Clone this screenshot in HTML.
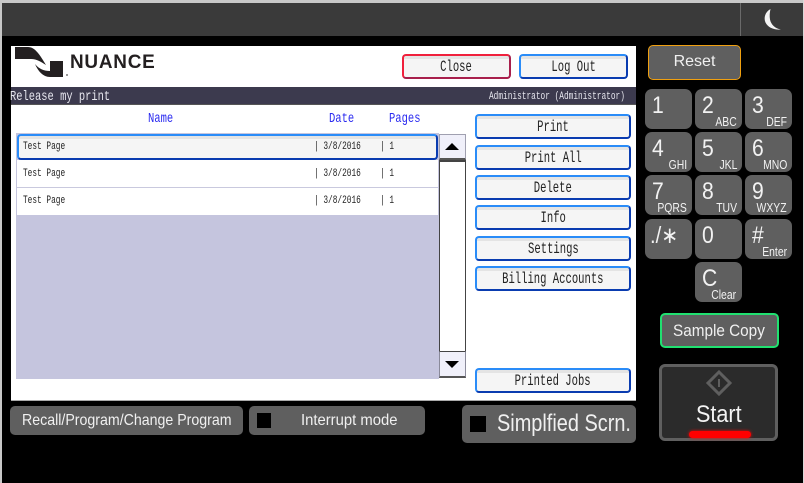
<!DOCTYPE html>
<html><head><meta charset="utf-8">
<style>
html,body{margin:0;padding:0}
body{width:804px;height:483px;background:#000;position:relative;overflow:hidden;font-family:"Liberation Sans",sans-serif}
div,span{position:absolute;box-sizing:border-box;white-space:nowrap}
.btn{border:2px solid;border-color:#2a8cf8 #0a3cb0 #0a3cb0 #2a8cf8;border-radius:4px;background:linear-gradient(#e4e4e4 0 3px,#f5f5f5 3px);color:#222;text-align:center;font-family:"Liberation Mono",monospace;font-size:16px;left:475px;width:156px;height:25px;line-height:22px;overflow:visible}
.btn span{position:static;display:inline-block;transform:scaleX(.66);margin:0 -10px}
.key{background:#5f5f5f;border-radius:7px;width:47px;height:40px;color:#f2f2f2}
.key b{position:absolute;font-weight:400;font-size:24px;left:7px;top:2px;line-height:30px;transform:scaleX(.88);transform-origin:0 0}
.key i{position:absolute;font-style:normal;font-size:13px;right:5px;bottom:0;line-height:15px;transform:scaleX(.8);transform-origin:100% 0}
.g{background:#5f5f5f;color:#f0f0f0;text-align:center}
.row{left:17px;width:421px;height:27px;background:#fff;border-bottom:1px solid #c9c9de}
.t{font-family:"Liberation Mono",monospace;font-size:11px;color:#222;line-height:11px;transform:scaleX(.71);transform-origin:0 0}
.h{font-family:"Liberation Mono",monospace;font-size:14px;color:#2a2af0;line-height:15px;top:112px;transform:scaleX(.75);transform-origin:0 0}
.l{transform-origin:0 0;color:#f0f0f0}
</style></head><body>
<div style="left:0;top:0;width:804px;height:3px;background:#c8c8c8"></div>
<div style="left:0;top:0;width:2px;height:483px;background:#c8c8c8"></div>
<div style="left:803px;top:0;width:1px;height:483px;background:#d8d8d8"></div>
<div style="left:2px;top:3px;width:801px;height:33px;background:#3a3a3a"></div>
<div style="left:740px;top:3px;width:1px;height:33px;background:#6a6a6a"></div>
<svg style="position:absolute;left:755px;top:4px" width="32" height="30" viewBox="0 0 32 30"><path d="M15.500 5C10 8 8.500 14 10.500 18.500c2.500 5 8 7.500 15.500 7-6-1-10-5-11-10-.6-3.500-.3-7 .5-10.500z" fill="#f4f4f4"/></svg>

<div style="left:11px;top:46px;width:625px;height:355px;background:#fff;border-bottom:1px solid #aaa"></div>
<svg style="position:absolute;left:0;top:0" width="80" height="80" viewBox="0 0 80 80"><path d="M15 47H28C35 47 40 55 46 65 41 62 37 59 31 59H15Z" fill="#231f20"/><path d="M35 64C39 69 44 71 50 71V61H63V77H50C43 77 38 71 35 64Z" fill="#231f20"/><circle cx="67" cy="75" r="1" fill="#777"/></svg>
<div style="left:70px;top:51px;font-size:19.500px;line-height:23px;color:#231f20;font-weight:700;letter-spacing:.8px;transform:scaleX(.97);transform-origin:0 0">NUANCE</div>

<div class="btn" style="left:402px;top:54px;width:109px;border-color:#f0203c #a8204c #a8204c #f0203c"><span>Close</span></div>
<div class="btn" style="left:519px;top:54px;width:109px"><span>Log Out</span></div>

<div style="left:11px;top:87px;width:625px;height:18px;background:#3c3a4e;border-bottom:1px solid #555"></div>
<div style="left:10px;top:89px;font-family:'Liberation Mono',monospace;font-size:14px;line-height:16px;color:#e6e6ee;transform:scaleX(.745);transform-origin:0 0">Release my print</div>
<div style="left:489px;top:91px;font-family:'Liberation Mono',monospace;font-size:11px;line-height:12px;color:#e6e6ee;transform:scaleX(.71);transform-origin:0 0">Administrator (Administrator)</div>

<div class="h" style="left:148px">Name</div>
<div class="h" style="left:329px">Date</div>
<div class="h" style="left:389px">Pages</div>

<div style="left:16px;top:133px;width:423px;height:246px;background:#c5c5de"></div>
<div class="row" style="top:160px;height:28px"></div>
<div class="row" style="top:188px;height:27px;border:0"></div>
<div class="btn" style="left:17px;top:134px;width:421px;height:26px"></div>
<div class="t" style="left:23px;top:142px">Test Page</div><div class="t" style="left:314px;top:142px">| 3/8/2016</div><div class="t" style="left:380px;top:142px">| 1</div>
<div class="t" style="left:23px;top:169px">Test Page</div><div class="t" style="left:314px;top:169px">| 3/8/2016</div><div class="t" style="left:380px;top:169px">| 1</div>
<div class="t" style="left:23px;top:196px">Test Page</div><div class="t" style="left:314px;top:196px">| 3/8/2016</div><div class="t" style="left:380px;top:196px">| 1</div>

<div style="left:439px;top:160px;width:27px;height:192px;background:#fff;border:1px solid #444;border-top:2px solid #444"></div>
<div style="left:439px;top:134px;width:27px;height:26px;background:#f0f0fa;border:1px solid #a0a0b0;border-bottom:2px solid #555"></div>
<div style="left:445px;top:143px;width:0;height:0;border-left:7px solid transparent;border-right:7px solid transparent;border-bottom:7px solid #000"></div>
<div style="left:439px;top:351px;width:27px;height:27px;background:#f0f0fa;border:1px solid #8a8a9a;border-bottom:2px solid #555;border-top:1px solid #444"></div>
<div style="left:445px;top:361px;width:0;height:0;border-left:7px solid transparent;border-right:7px solid transparent;border-top:7px solid #000"></div>

<div class="btn" style="top:114px"><span>Print</span></div>
<div class="btn" style="top:145px"><span>Print All</span></div>
<div class="btn" style="top:175px"><span>Delete</span></div>
<div class="btn" style="top:205px"><span>Info</span></div>
<div class="btn" style="top:236px"><span>Settings</span></div>
<div class="btn" style="top:266px"><span>Billing Accounts</span></div>
<div class="btn" style="top:368px"><span>Printed Jobs</span></div>

<div class="g" style="left:648px;top:45px;width:93px;height:35px;border:1.500px solid #f0a010;border-radius:5px;font-size:16px;line-height:32px">Reset</div>

<div class="key" style="left:645px;top:89px"><b>1</b></div>
<div class="key" style="left:695px;top:89px"><b>2</b><i>ABC</i></div>
<div class="key" style="left:745px;top:89px"><b>3</b><i>DEF</i></div>
<div class="key" style="left:645px;top:132px"><b>4</b><i>GHI</i></div>
<div class="key" style="left:695px;top:132px"><b>5</b><i>JKL</i></div>
<div class="key" style="left:745px;top:132px"><b>6</b><i>MNO</i></div>
<div class="key" style="left:645px;top:175px"><b>7</b><i>PQRS</i></div>
<div class="key" style="left:695px;top:175px"><b>8</b><i>TUV</i></div>
<div class="key" style="left:745px;top:175px"><b>9</b><i>WXYZ</i></div>
<div class="key" style="left:645px;top:219px"><b style="left:5px;top:1px;font-size:23px">./∗</b></div>
<div class="key" style="left:695px;top:219px"><b>0</b></div>
<div class="key" style="left:745px;top:219px"><b style="top:2px">#</b><i>Enter</i></div>
<div class="key" style="left:695px;top:262px"><b>C</b><i style="right:6px">Clear</i></div>

<div class="g" style="left:660px;top:313px;width:119px;height:35px;border:2px solid #20e070;border-radius:5px"></div>
<div class="l" style="left:673px;top:313px;font-size:17px;line-height:35px;transform:scaleX(.9)">Sample Copy</div>

<div style="left:659px;top:364px;width:119px;height:77px;background:#2b2b2b;border:3px solid #5f5f5f;border-radius:6px"></div>
<svg style="position:absolute;left:706px;top:370px" width="26" height="26" viewBox="0 0 26 26"><path d="M13 2L24 13 13 24 2 13z" fill="none" stroke="#5f5f5f" stroke-width="3"/><path d="M13 9v8" stroke="#5f5f5f" stroke-width="2"/></svg>
<div class="l" style="left:696px;top:401px;font-size:24px;line-height:28px;color:#f4f4f4;transform:scaleX(.9)">Start</div>
<div style="left:689px;top:431px;width:62px;height:7px;background:#f00;border-radius:4px;box-shadow:0 0 3px #f00"></div>

<div class="g" style="left:10px;top:406px;width:233px;height:29px;border-radius:5px"></div>
<div class="l" style="left:22px;top:406px;font-size:16px;line-height:29px;transform:scaleX(.886)">Recall/Program/Change Program</div>
<div class="g" style="left:249px;top:406px;width:176px;height:29px;border-radius:5px"></div>
<div style="left:257px;top:413px;width:14px;height:15px;background:#000"></div>
<div class="l" style="left:301px;top:406px;font-size:16px;line-height:29px;transform:scaleX(.927)">Interrupt mode</div>
<div class="g" style="left:462px;top:405px;width:174px;height:38px;border-radius:5px"></div>
<div style="left:470px;top:416px;width:16px;height:16px;background:#000"></div>
<div class="l" style="left:497px;top:405px;font-size:24px;line-height:38px;transform:scaleX(.83)">Simplfied Scrn.</div>
</body></html>
